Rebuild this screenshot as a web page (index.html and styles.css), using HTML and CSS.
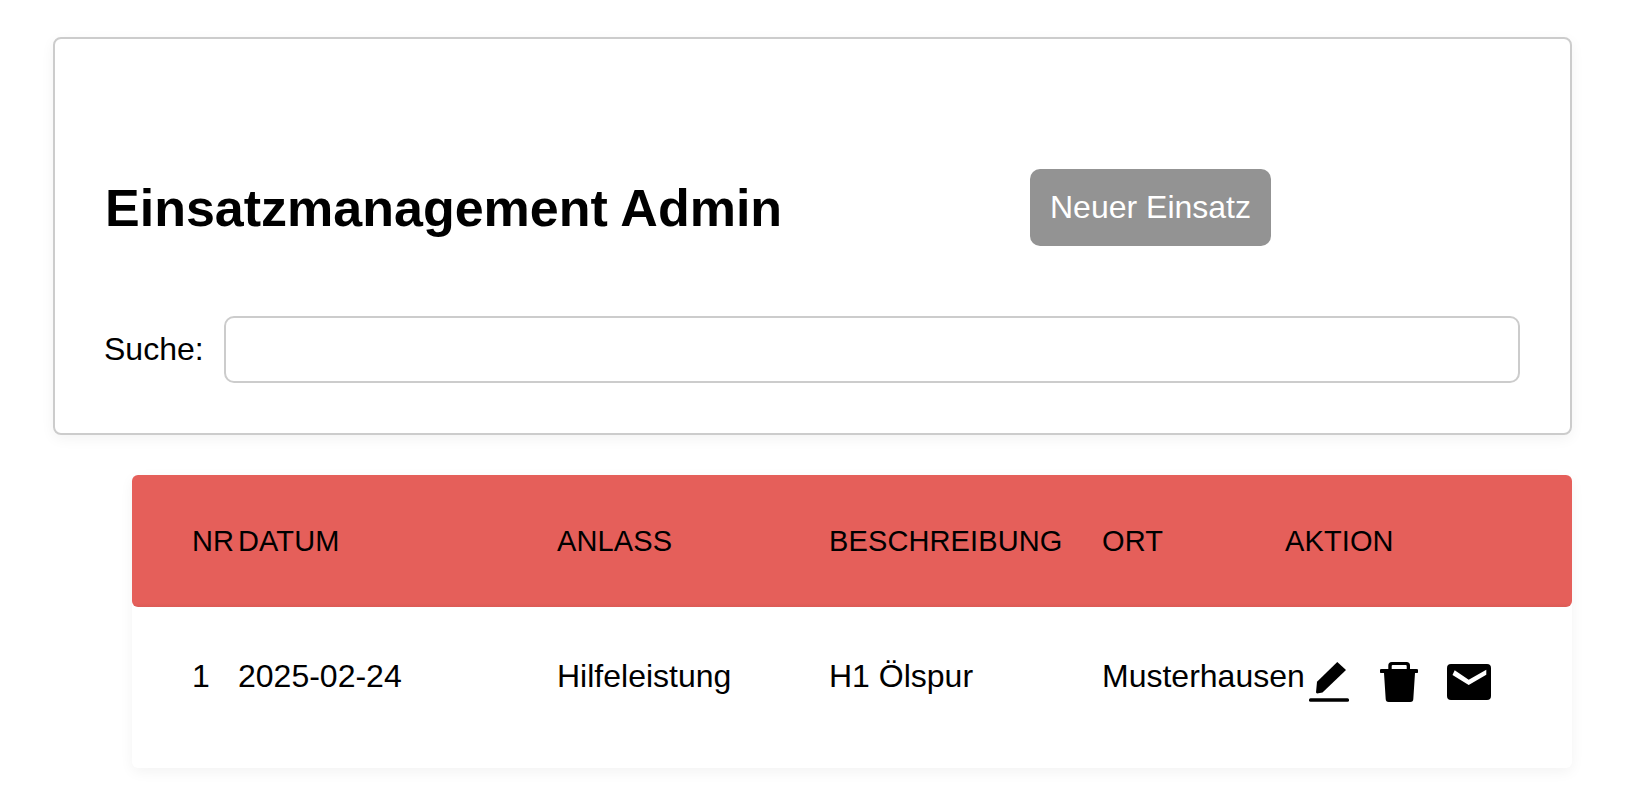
FILE: index.html
```html
<!DOCTYPE html>
<html lang="de">
<head>
<meta charset="utf-8">
<title>Einsatzmanagement Admin</title>
<link rel="stylesheet" href="styles.css">
</head>
<body>
<section class="card">
  <div class="head">
    <h1 class="title">Einsatzmanagement Admin</h1>
    <button class="new-btn" type="button">Neuer Einsatz</button>
  </div>
  <label class="search">
    <span class="search-label">Suche:</span>
    <input class="search-input" type="text">
  </label>
</section>
<div class="list-wrap">
<table class="list">
  <colgroup>
    <col class="c-nr"><col class="c-date"><col class="c-cause"><col class="c-desc"><col class="c-place"><col class="c-act">
  </colgroup>
  <thead>
    <tr>
      <th>NR</th><th>DATUM</th><th>ANLASS</th><th>BESCHREIBUNG</th><th>ORT</th><th>AKTION</th>
    </tr>
  </thead>
  <tbody>
    <tr>
      <td>1</td><td>2025-02-24</td><td>Hilfeleistung</td><td>H1 Ölspur</td><td>Musterhausen</td>
      <td class="actions">
        <div class="icons">
          <svg class="icon i-edit" viewBox="0 0 40 40"><path d="M28.300 0 37 8 13.500 30.500 8 31.500 7 30.500 8 19.700z"/><rect x="0" y="36.300" width="40" height="3.400" rx="1.500"/></svg>
          <svg class="icon i-trash" viewBox="0 0 38 40"><path fill-rule="evenodd" d="M8.300 7V3.500A3.500 3.500 0 0 1 11.800 0h14.700A3.500 3.500 0 0 1 30 3.500V7h6.500a1.900 1.900 0 0 1 0 4H35L33.300 37a3 3 0 0 1-3 3H8.700a3 3 0 0 1-3-3L4 11H1.500a1.900 1.900 0 0 1 0-4zM11.700 7H26.700V4a1 1 0 0 0-1-1H12.700a1 1 0 0 0-1 1z"/></svg>
          <svg class="icon i-mail" viewBox="0 0 44 36"><path fill-rule="evenodd" d="M4 0h36a4 4 0 0 1 4 4v28a4 4 0 0 1-4 4H4a4 4 0 0 1-4-4V4a4 4 0 0 1 4-4zM7.700 6.300 5.500 11 21.700 21 39.300 10.700V5.700L21.700 15.700z"/></svg>
        </div>
      </td>
    </tr>
  </tbody>
</table>
</div>
</body>
</html>
```
FILE: styles.css
```css
* { box-sizing: border-box; }
html, body { height: 100%; }
body {
  margin: 0;
  padding: 37px 64px 42px 53px;
  background: #fff;
  color: #000;
  font-family: "Liberation Sans", Arial, sans-serif;
}
.card {
  height: 398px;
  padding: 106px 50px 0;
  border: 2px solid #ccc;
  border-radius: 8px;
  box-shadow: 0 4px 14px rgba(0,0,0,.05);
}
.head { display: flex; align-items: center; height: 130px; }
.title { margin: 0 0 4px; width: 925px; font-size: 52px; font-weight: 700; line-height: 56px; }
.new-btn {
  width: 241px;
  height: 77px;
  padding: 0;
  margin-top: -6px;
  border: 0;
  border-radius: 10px;
  background: #939393;
  color: #fff;
  font: 32px "Liberation Sans", Arial, sans-serif;
}
.search { display: flex; align-items: center; gap: 20px; margin-top: 41px; font-size: 32px; }
.search-label { margin-left: -1px; }
.search-input {
  flex: 1;
  height: 67px;
  border: 2px solid #ccc;
  border-radius: 10px;
  background: #fff;
}
.list-wrap {
  width: 1440px;
  height: 293px;
  margin: 40px 0 0 79px;
  border-radius: 6px;
  background: #fff;
  box-shadow: 0 4px 14px rgba(0,0,0,.05);
}
.list {
  width: 100%;
  table-layout: fixed;
  border-collapse: separate;
  border-spacing: 0;
}
.c-nr { width: 106px; }
.c-date { width: 319px; }
.c-cause { width: 272px; }
.c-desc { width: 273px; }
.c-place { width: 183px; }
th, td { padding: 0; text-align: left; white-space: nowrap; font-size: 32px; }
th:first-child, td:first-child { padding-left: 60px; }
th {
  height: 132px;
  background: linear-gradient(#e55f5a calc(100% - 4px), #db5b56);
  font-size: 29px;
  font-weight: 400;
  letter-spacing: .12px;
}
th:first-child { border-radius: 6px 0 0 6px; }
th:last-child { border-radius: 0 6px 6px 0; }
td { height: 161px; padding-bottom: 22px; }
td.actions { padding: 0 0 11px 24px; }
.icons { display: flex; align-items: center; }
.icon { flex: none; fill: #000; }
.i-edit { width: 40px; height: 40px; margin-right: 31px; }
.i-trash { width: 38px; height: 40px; margin-right: 29px; }
.i-mail { width: 44px; height: 36px; }
```
